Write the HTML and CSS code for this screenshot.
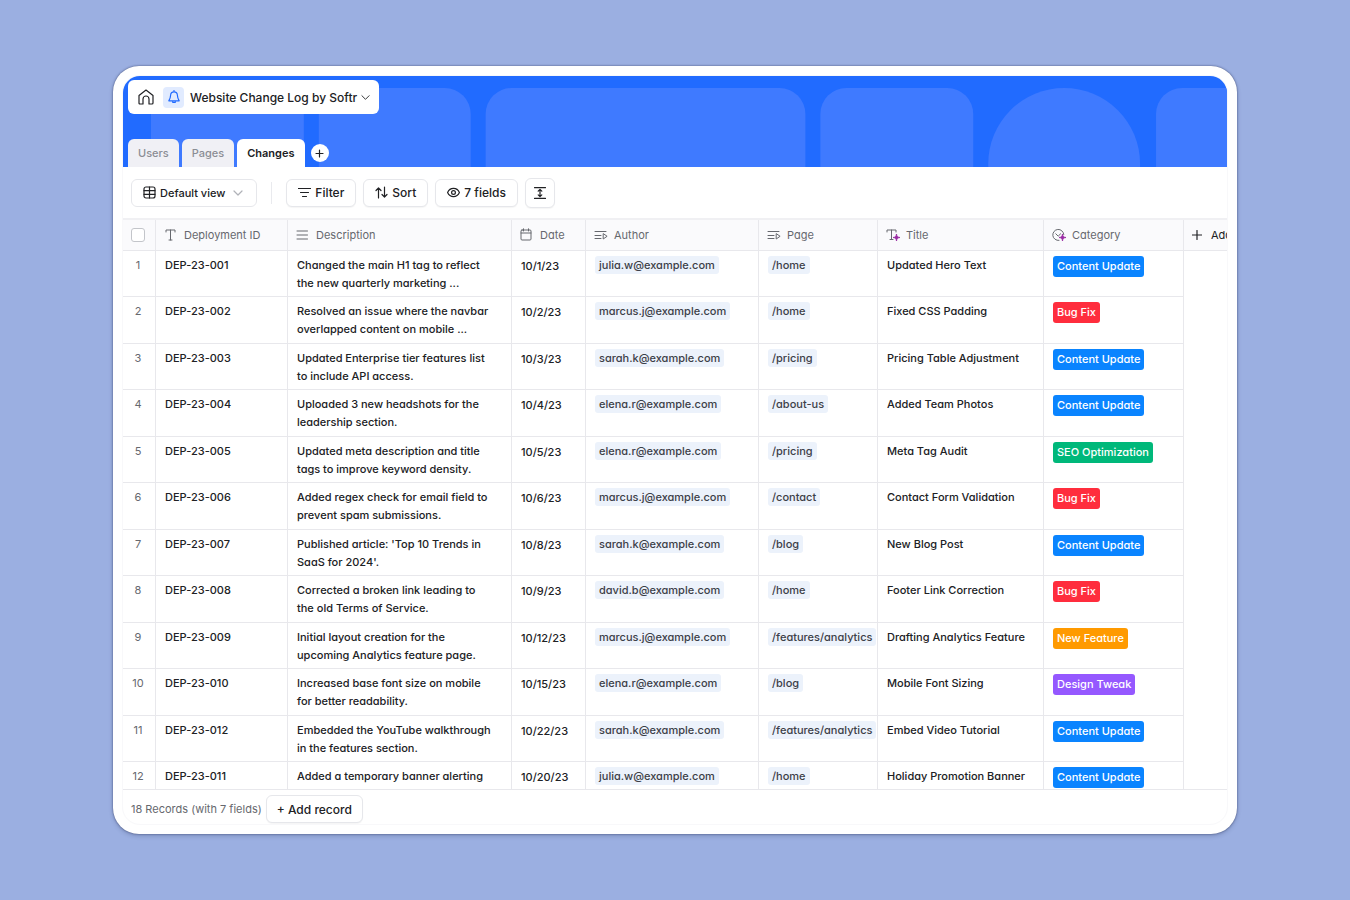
FILE: index.html
```html
<!DOCTYPE html>
<html lang="en">
<head>
  <meta charset="UTF-8" />
  <title>Website Change Log by Softr</title>
  <meta name="viewport" content="width=device-width, initial-scale=1.0" />
  <link rel="stylesheet" href="styles.css">
</head>
<body>

  <!-- shared icons -->
  <svg class="sprite" aria-hidden="true">
    <symbol id="i-chevron" viewBox="0 0 10 10"><path d="M1 3l4 4 4-4" /></symbol>
    <symbol id="i-link" viewBox="0 0 14 14"><path d="M1 3.500h11M1 7.500h6M1 10.500h6M9.200 6v5l3.600-2.500z" /></symbol>
    <symbol id="i-spark" viewBox="0 0 8 8"><path d="M4 0C4.400 2.800 5.200 3.600 8 4C5.200 4.400 4.400 5.200 4 8C3.600 5.200 2.800 4.400 0 4C2.800 3.600 3.600 2.800 4 0z" /></symbol>
  </svg>

  <main class="window">
    <div class="app">

      <header class="banner">
        <svg class="banner-art" viewBox="0 0 1105 92" preserveAspectRatio="xMinYMin slice" aria-hidden="true">
          <rect x="28" y="12" width="153" height="140" rx="26" />
          <rect x="196" y="12" width="152" height="140" rx="26" />
          <rect x="363" y="12" width="320" height="140" rx="26" />
          <rect x="698" y="12" width="153" height="140" rx="26" />
          <circle cx="942" cy="88" r="76" />
          <rect x="1034" y="12" width="153" height="140" rx="26" />
        </svg>

        <div class="title-bar">
          <a class="home" href="#" aria-label="Home">
            <svg class="icon" width="18" height="18" viewBox="0 0 18 18"><path d="M2 7.500L9 2l7 5.500v7.500q0 1-1 1h-3v-5a3 3 0 0 0-6 0v5H3q-1 0-1-1z" /></svg>
          </a>
          <span class="app-icon">
            <svg class="icon" width="14" height="14" viewBox="0 0 14 14"><path d="M7 1.800C4.800 1.800 3.700 3.300 3.600 5.200C3.500 7.500 3 9 1.800 10.800h10.400C11 9 10.500 7.500 10.400 5.200C10.300 3.300 9.200 1.800 7 1.800zM7 .5v1.300M5.800 11v1.500h2.400V11" /></svg>
          </span>
          <button class="app-name" type="button">Website Change Log by Softr
            <svg class="icon" width="9" height="9"><use href="#i-chevron" /></svg>
          </button>
        </div>

        <nav class="tabs">
          <a class="tab" href="#">Users</a>
          <a class="tab" href="#">Pages</a>
          <a class="tab active" href="#">Changes</a>
          <button class="add-tab" type="button" aria-label="Add table">
            <svg class="icon" width="9" height="9" viewBox="0 0 9 9"><path d="M4.500 1v7M1 4.500h7" /></svg>
          </button>
        </nav>
      </header>

      <div class="toolbar">
        <button class="btn view" type="button">
          <svg class="icon" width="13" height="13" viewBox="0 0 13 13"><rect x="1" y="1" width="11" height="11" rx="2" /><path d="M6.500 1v11M1 4.700h11M1 8.300h11" /></svg>
          Default view
          <svg class="icon muted" width="10" height="10"><use href="#i-chevron" /></svg>
        </button>
        <span class="divider"></span>
        <button class="btn" type="button">
          <svg class="icon" width="13" height="13" viewBox="0 0 13 13"><path d="M.5 2.500h12M2.500 6.500h8M4.500 10.500h4" /></svg>
          Filter
        </button>
        <button class="btn" type="button">
          <svg class="icon" width="13" height="13" viewBox="0 0 13 13"><path d="M3.500 12V2M1 4.500L3.500 2L6 4.500M9.500 1v10M7 8.500L9.500 11L12 8.500" /></svg>
          Sort
        </button>
        <button class="btn" type="button">
          <svg class="icon" width="13" height="13" viewBox="0 0 13 13"><path d="M.6 6.500C3 1 10 1 12.400 6.500C10 12 3 12 .6 6.500z" /><circle cx="6.500" cy="6.500" r="1.900" /></svg>
          7 fields
        </button>
        <button class="btn square" type="button" aria-label="Row height">
          <svg class="icon" width="12" height="12" viewBox="0 0 12 12"><path d="M.5 .7h11M.5 11.300h11M6 2.500v7M4.200 4.200L6 2.400l1.800 1.800M4.200 7.800L6 9.600l1.800-1.800" /></svg>
        </button>
      </div>

      <div class="grid">
        <table>
          <colgroup>
            <col class="c-num"><col class="c-id"><col class="c-desc"><col class="c-date"><col class="c-author"><col class="c-page"><col class="c-title"><col class="c-cat"><col class="c-add">
          </colgroup>
          <thead>
            <tr>
              <th class="num"><input type="checkbox" aria-label="Select all records"></th>
              <th><span class="head"><svg class="icon" width="14" height="14" viewBox="0 0 14 14"><path d="M2 4V2h9v2M6.500 2v10M5 12h3" /></svg>Deployment ID</span></th>
              <th><span class="head"><svg class="icon" width="14" height="14" viewBox="0 0 14 14"><path d="M1 3h10.500M1 7h10.500M1 11h10.500" /></svg>Description</span></th>
              <th><span class="head"><svg class="icon" width="14" height="14" viewBox="0 0 14 14"><rect x="1" y="2" width="10" height="10" rx="1" /><path d="M1 5h10M3.500 .8V3M8.500 .8V3" /></svg>Date</span></th>
              <th><span class="head"><svg class="icon" width="14" height="14"><use href="#i-link" /></svg>Author</span></th>
              <th><span class="head"><svg class="icon" width="14" height="14"><use href="#i-link" /></svg>Page</span></th>
              <th><span class="head"><svg class="icon" width="14" height="14" viewBox="0 0 14 14"><path d="M1 4V2h9v2M5.500 2v9.500M4 11.500h3" /><use class="spark" href="#i-spark" x="7" y="6" width="7" height="7" /></svg>Title</span></th>
              <th><span class="head"><svg class="icon" width="14" height="14" viewBox="0 0 14 14"><path d="M11.800 6.500A5.500 5.500 0 1 0 7 12.400M3.800 5.800L6.200 8.200l2.400-2.400" /><use class="spark" href="#i-spark" x="7" y="6" width="7" height="7" /></svg>Category</span></th>
              <th><button class="add-field" type="button"><svg class="icon" width="10" height="10" viewBox="0 0 10 10"><path d="M5 .5v9M.5 5h9" /></svg>Add field</button></th>
            </tr>
          </thead>
          <tbody>
            <tr>
              <td class="num">1</td><td>DEP-23-001</td><td class="desc">Changed the main H1 tag to reflect the new quarterly marketing ...</td><td class="date">10/1/23</td>
              <td><span class="chip">julia.w@example.com</span></td><td><span class="chip">/home</span></td><td>Updated Hero Text</td><td><span class="tag blue">Content Update</span></td><td></td>
            </tr>
            <tr>
              <td class="num">2</td><td>DEP-23-002</td><td class="desc">Resolved an issue where the navbar overlapped content on mobile ...</td><td class="date">10/2/23</td>
              <td><span class="chip">marcus.j@example.com</span></td><td><span class="chip">/home</span></td><td>Fixed CSS Padding</td><td><span class="tag red">Bug Fix</span></td><td></td>
            </tr>
            <tr>
              <td class="num">3</td><td>DEP-23-003</td><td class="desc">Updated Enterprise tier features list to include API access.</td><td class="date">10/3/23</td>
              <td><span class="chip">sarah.k@example.com</span></td><td><span class="chip">/pricing</span></td><td>Pricing Table Adjustment</td><td><span class="tag blue">Content Update</span></td><td></td>
            </tr>
            <tr>
              <td class="num">4</td><td>DEP-23-004</td><td class="desc">Uploaded 3 new headshots for the leadership section.</td><td class="date">10/4/23</td>
              <td><span class="chip">elena.r@example.com</span></td><td><span class="chip">/about-us</span></td><td>Added Team Photos</td><td><span class="tag blue">Content Update</span></td><td></td>
            </tr>
            <tr>
              <td class="num">5</td><td>DEP-23-005</td><td class="desc">Updated meta description and title tags to improve keyword density.</td><td class="date">10/5/23</td>
              <td><span class="chip">elena.r@example.com</span></td><td><span class="chip">/pricing</span></td><td>Meta Tag Audit</td><td><span class="tag green">SEO Optimization</span></td><td></td>
            </tr>
            <tr>
              <td class="num">6</td><td>DEP-23-006</td><td class="desc">Added regex check for email field to prevent spam submissions.</td><td class="date">10/6/23</td>
              <td><span class="chip">marcus.j@example.com</span></td><td><span class="chip">/contact</span></td><td>Contact Form Validation</td><td><span class="tag red">Bug Fix</span></td><td></td>
            </tr>
            <tr>
              <td class="num">7</td><td>DEP-23-007</td><td class="desc">Published article: 'Top 10 Trends in SaaS for 2024'.</td><td class="date">10/8/23</td>
              <td><span class="chip">sarah.k@example.com</span></td><td><span class="chip">/blog</span></td><td>New Blog Post</td><td><span class="tag blue">Content Update</span></td><td></td>
            </tr>
            <tr>
              <td class="num">8</td><td>DEP-23-008</td><td class="desc">Corrected a broken link leading to the old Terms of Service.</td><td class="date">10/9/23</td>
              <td><span class="chip">david.b@example.com</span></td><td><span class="chip">/home</span></td><td>Footer Link Correction</td><td><span class="tag red">Bug Fix</span></td><td></td>
            </tr>
            <tr>
              <td class="num">9</td><td>DEP-23-009</td><td class="desc">Initial layout creation for the upcoming Analytics feature page.</td><td class="date">10/12/23</td>
              <td><span class="chip">marcus.j@example.com</span></td><td><span class="chip">/features/analytics</span></td><td>Drafting Analytics Feature</td><td><span class="tag orange">New Feature</span></td><td></td>
            </tr>
            <tr>
              <td class="num">10</td><td>DEP-23-010</td><td class="desc">Increased base font size on mobile for better readability.</td><td class="date">10/15/23</td>
              <td><span class="chip">elena.r@example.com</span></td><td><span class="chip">/blog</span></td><td>Mobile Font Sizing</td><td><span class="tag purple">Design Tweak</span></td><td></td>
            </tr>
            <tr>
              <td class="num">11</td><td>DEP-23-012</td><td class="desc">Embedded the YouTube walkthrough in the features section.</td><td class="date">10/22/23</td>
              <td><span class="chip">sarah.k@example.com</span></td><td><span class="chip">/features/analytics</span></td><td>Embed Video Tutorial</td><td><span class="tag blue">Content Update</span></td><td></td>
            </tr>
            <tr>
              <td class="num">12</td><td>DEP-23-011</td><td class="desc">Added a temporary banner alerting users to holiday hours.</td><td class="date">10/20/23</td>
              <td><span class="chip">julia.w@example.com</span></td><td><span class="chip">/home</span></td><td>Holiday Promotion Banner</td><td><span class="tag blue">Content Update</span></td><td></td>
            </tr>
          </tbody>
        </table>
      </div>

      <footer class="footer">
        <span>18 Records (with 7 fields)</span>
        <button class="btn add-record" type="button">+ Add record</button>
      </footer>

    </div>
  </main>

</body>
</html>
```
FILE: styles.css
```css
* {
  box-sizing: border-box;
  margin: 0;
  padding: 0;
}

body {
  display: flex;
  height: 100vh;
  padding: 66px 113px;
  background: #9bafe1;
  font-family: Inter, "Liberation Sans", sans-serif;
  font-size: 12px;
  font-weight: 500;
  color: #202124;
}

button {
  font: inherit;
  font-feature-settings: inherit;
  color: inherit;
  background: none;
  border: none;
  cursor: pointer;
}

a {
  color: inherit;
  text-decoration: none;
}

.sprite {
  position: absolute;
  width: 0;
  height: 0;
}

.icon {
  flex: none;
  fill: none;
  stroke: currentColor;
  stroke-width: 1.2;
  stroke-linecap: round;
  stroke-linejoin: round;
}

.window {
  flex: 1;
  display: flex;
  min-width: 0;
  padding: 9px;
  background: #fff;
  border-radius: 26px;
  box-shadow: 0 0 2px rgba(40, 50, 90, 0.8), 0 2px 4px rgba(40, 50, 90, 0.25);
}

.app {
  flex: 1;
  display: flex;
  flex-direction: column;
  min-width: 0;
  border: 1px solid #f8f8fa;
  border-radius: 18px;
  overflow: hidden;
}

/* blue banner */
.banner {
  position: relative;
  display: flex;
  flex-direction: column;
  justify-content: space-between;
  flex: none;
  height: 91px;
  padding: 4px 5px 0;
  background: #216bff;
}

.banner-art {
  position: absolute;
  inset: 0;
  width: 100%;
  height: 100%;
  fill: #3f7aff;
}

.title-bar {
  position: relative;
  display: flex;
  align-items: center;
  align-self: flex-start;
  gap: 6px;
  height: 34px;
  padding: 0 9px;
  background: #fff;
  border-radius: 6px;
}

.home {
  display: flex;
  margin-right: 2px;
}

.app-icon {
  display: flex;
  align-items: center;
  justify-content: center;
  width: 21px;
  height: 21px;
  border-radius: 4px;
  background: #e1ebff;
  color: #216bff;
}

.app-name {
  display: flex;
  align-items: center;
  gap: 4px;
  white-space: nowrap;
}

.app-name .icon {
  stroke-width: 1;
}

.tabs {
  position: relative;
  display: flex;
  gap: 3px;
  font-size: 11px;
}

.tab {
  height: 28px;
  padding: 0 10px;
  line-height: 29px;
  border-radius: 6px 6px 0 0;
  background: #f0f0f5;
  color: #8b8d94;
}

.tab.active {
  background: #fff;
  color: #202124;
  font-weight: 600;
}

.add-tab {
  display: flex;
  align-items: center;
  justify-content: center;
  align-self: center;
  width: 18px;
  height: 18px;
  margin-left: 3px;
  border-radius: 50%;
  background: #fff;
}

/* view toolbar */
.toolbar {
  display: flex;
  align-items: center;
  flex: none;
  gap: 7px;
  height: 51px;
  padding: 0 8px;
}

.btn {
  display: flex;
  align-items: center;
  gap: 4px;
  height: 28px;
  padding: 0 11px;
  border: 1px solid #e6e7eb;
  border-radius: 6px;
  background: #fff;
  box-shadow: 0 1px 1px rgba(0, 0, 0, 0.04);
  white-space: nowrap;
}

.view {
  font-size: 11px;
  box-shadow: none;
}

.muted {
  color: #b0b2b8;
  margin: 0 2px 0 4px;
}

.divider {
  width: 1px;
  height: 22px;
  margin: 0 7px;
  background: #e9eaee;
}

.square {
  justify-content: center;
  width: 30px;
  height: 30px;
  padding: 0;
}

/* records */
.grid {
  flex: 1;
  min-height: 0;
  border-top: 2px solid #f0f0f3;
  border-bottom: 1px solid #e8e8ec;
  overflow: hidden;
  font-size: 11px;
  font-feature-settings: "cv11";
}

table {
  width: 1181px;
  table-layout: fixed;
  border-spacing: 0;
}

.c-num { width: 33px; }
.c-id { width: 132px; }
.c-desc { width: 224px; }
.c-date { width: 74px; }
.c-author { width: 173px; }
.c-page { width: 119px; }
.c-title { width: 166px; }
.c-cat { width: 140px; }
.c-add { width: 120px; }

th {
  height: 31px;
  padding: 0 8px;
  border-right: 1px solid #e8e8ec;
  border-bottom: 1px solid #e8e8ec;
  background: #fafafc;
  color: #66686e;
  font-weight: 400;
  text-align: left;
}

.head {
  display: flex;
  align-items: center;
  gap: 6px;
}

.head .icon {
  stroke-width: 1;
}

.head .spark {
  fill: #9b2fa5;
  stroke: #9b2fa5;
}

th input {
  appearance: none;
  display: block;
  width: 14px;
  height: 14px;
  margin: 0 auto;
  border: 1px solid #c3c5ca;
  border-radius: 3px;
  background: #fff;
}

.add-field {
  display: flex;
  align-items: center;
  gap: 9px;
  color: #202124;
}

td {
  height: 46px;
  padding: 5px 9px 0;
  border-right: 1px solid #e8e8ec;
  border-bottom: 1px solid #e8e8ec;
  line-height: 18px;
  vertical-align: top;
  overflow: hidden;
}

tr:nth-child(even) td {
  height: 47px;
}

td:last-child {
  border: none;
}

.num {
  padding-left: 0;
  padding-right: 2px;
  color: #66686e;
  font-weight: 400;
  text-align: center;
}

td.desc {
  padding-right: 20px;
}

td.date {
  padding-top: 6px;
}

.chip,
.tag {
  display: block;
  width: fit-content;
  padding: 0 4px;
  border-radius: 3px;
  white-space: nowrap;
}

.chip {
  background: #ecf2fb;
  color: #3c4048;
}

.tag {
  color: #fff;
  line-height: 21px;
}

.blue { background: #0a84ff; }
.red { background: #ff2d3d; }
.green { background: #00b87a; }
.orange { background: #ff9a00; }
.purple { background: #9558ff; }

/* bottom bar */
.footer {
  display: flex;
  align-items: center;
  flex: none;
  gap: 4px;
  height: 34px;
  padding: 4px 8px 0;
  color: #66686e;
  font-size: 11px;
  font-weight: 400;
}

.add-record {
  padding: 0 10px;
  color: #202124;
  font-size: 12px;
  font-weight: 500;
}
```
